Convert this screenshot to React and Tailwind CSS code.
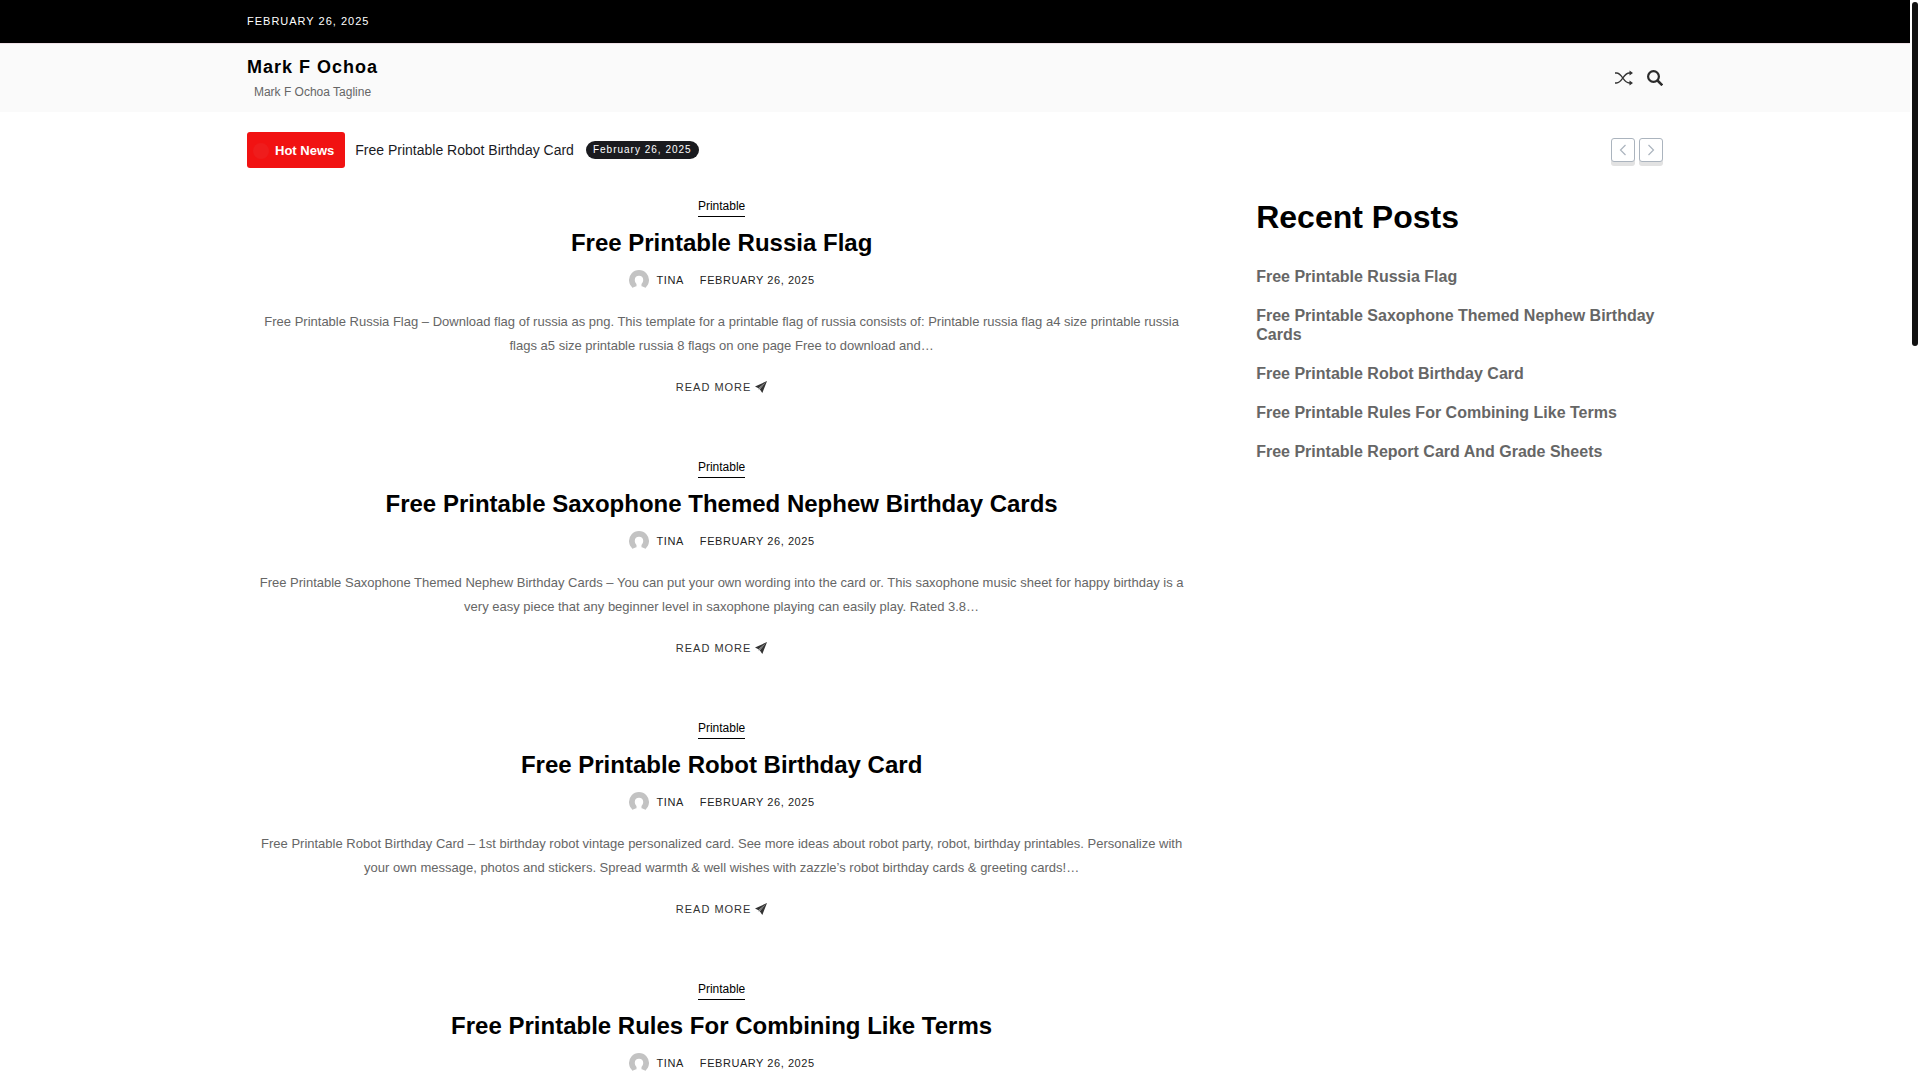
const posts = [
  {
    id: 1,
    title: 'Free Printable Russia Flag',
    excerpt:
      'Free Printable Russia Flag – Download flag of russia as png. This template for a printable flag of russia consists of: Printable russia flag a4 size printable russia flags a5 size printable russia 8 flags on one page Free to download and…',
  },
  {
    id: 2,
    title: 'Free Printable Saxophone Themed Nephew Birthday Cards',
    excerpt:
      'Free Printable Saxophone Themed Nephew Birthday Cards – You can put your own wording into the card or. This saxophone music sheet for happy birthday is a very easy piece that any beginner level in saxophone playing can easily play. Rated 3.8…',
  },
  {
    id: 3,
    title: 'Free Printable Robot Birthday Card',
    excerpt:
      'Free Printable Robot Birthday Card – 1st birthday robot vintage personalized card. See more ideas about robot party, robot, birthday printables. Personalize with your own message, photos and stickers. Spread warmth & well wishes with zazzle’s robot birthday cards & greeting cards!…',
  },
  { id: 4, title: 'Free Printable Rules For Combining Like Terms' },
];

const recentPosts = [
  'Free Printable Russia Flag',
  'Free Printable Saxophone Themed Nephew Birthday Cards',
  'Free Printable Robot Birthday Card',
  'Free Printable Rules For Combining Like Terms',
  'Free Printable Report Card And Grade Sheets',
];

function ShuffleIcon() {
  return (
    <svg width="18" height="16" viewBox="0 0 18 16" fill="none" stroke="#333" strokeWidth="1.3">
      <path d="M0 3h1.5c6 0 6.5 10 13 10H16M0 13h1.5c6 0 6.5-10 13-10H16" />
      <path d="M14.5 .5v5L18 3zM14.500 10.5v5L18 13z" fill="#333" stroke="none" />
    </svg>
  );
}

function SearchIcon() {
  return (
    <svg width="16" height="16" viewBox="0 0 16 16" fill="none" stroke="#2b2b2b">
      <circle cx="6.5" cy="6.5" r="5.4" strokeWidth="2.200" />
      <path d="M10.500 10.500l4.800 4.800" strokeWidth="2.500" />
    </svg>
  );
}

function PlaneIcon() {
  return (
    <svg width="12" height="12" viewBox="0 0 12 12">
      <path d="M12 0L0 5.500l3.500 1.700L10 2 4.800 8.200 7.300 12z" fill="#333" />
      <path d="M12 0L3.500 7.200v1.300l1.300-.3L10.200 2z" fill="#777" />
    </svg>
  );
}

function Avatar() {
  return (
    <svg width="20" height="20" viewBox="0 0 20 20">
      <path
        d="M3.800 17.900A10 10 0 1 1 16.200 17.900C15.500 17 14 16.500 12.500 16.200V14C13.700 13 14.200 11.500 14.200 9.800C14.200 7.300 12.500 5.800 10 5.800S5.800 7.300 5.800 9.800C5.800 11.500 6.300 13 7.500 14V16.200C6 16.500 4.500 17 3.800 17.900Z"
        fill="#c3c3c3"
      />
    </svg>
  );
}

function SliderButton({ label, points }) {
  return (
    <button
      aria-label={label}
      className="w-6 h-6 flex items-center justify-center rounded-[3px] border border-[#abb4be] bg-white shadow-[0_4px_0_#e2e2e2]"
    >
      <svg width="8" height="12" viewBox="0 0 8 12" fill="none" stroke="#abb4be" strokeWidth="1.2">
        <polyline points={points} />
      </svg>
    </button>
  );
}

function Post({ post }) {
  return (
    <article className="flex flex-col items-center text-center pb-[60px]">
      <a href="#" className="text-xs leading-5 text-black border-b border-black">
        Printable
      </a>
      <h2 className="mt-[10px] text-2xl leading-8 font-bold text-black">
        <a href="#">{post.title}</a>
      </h2>
      <div className="mt-[11px] h-5 flex items-center text-[11px] leading-5 tracking-wider uppercase text-[#222]">
        <Avatar />
        <a href="#" className="ml-2">Tina</a>
        <time className="ml-4">February 26, 2025</time>
      </div>
      {post.excerpt && (
        <>
          <p className="mt-5 px-2 text-[13px] leading-6 text-[#666]">{post.excerpt}</p>
          <a href="#" className="mt-[19px] flex items-center gap-1 text-[11px] leading-5 tracking-[1px] uppercase text-[#333]">
            Read More <PlaneIcon />
          </a>
        </>
      )}
    </article>
  );
}

function App() {
  return (
    <div className="h-screen flex overflow-hidden bg-white font-['Liberation_Sans',Arial,sans-serif]">
      <div className="flex-1 min-w-0">
        <div className="bg-black">
          <div className="max-w-[1440px] mx-auto px-3 pt-[11px] pb-3">
            <span className="block text-[11px] leading-5 tracking-[1px] uppercase text-white">February 26, 2025</span>
          </div>
        </div>

        <header className="bg-[#fafafa] border-t border-[#eee0e6]">
          <div className="max-w-[1440px] mx-auto px-3 h-[68px] flex items-center justify-between">
            <div className="text-center">
              <a href="#" className="block pt-px text-lg leading-6 font-bold tracking-[1px] text-black">Mark F Ochoa</a>
              <p className="mt-[3px] text-xs leading-5 text-[#666]">Mark F Ochoa Tagline</p>
            </div>
            <div className="flex items-center gap-[14px]">
              <button aria-label="Random post"><ShuffleIcon /></button>
              <button aria-label="Search"><SearchIcon /></button>
            </div>
          </div>
        </header>

        <main className="max-w-[1440px] mx-auto px-3 pt-5">
          <section className="flex items-center">
            <div className="h-9 pt-px pl-[6px] pr-[11px] flex items-center gap-[6px] rounded-[3px] bg-[#f11212] text-[13px] font-bold text-white">
              <span className="w-4 h-4 rounded-full bg-[#ef1c1c]"></span>
              Hot News
            </div>
            <a href="#" className="ml-[10px] text-sm text-[#1a1b1f]">Free Printable Robot Birthday Card</a>
            <time className="ml-3 px-[7px] rounded-full bg-[#1a1b1f] text-[10px] leading-[18px] tracking-[1px] text-white">
              February 26, 2025
            </time>
            <div className="ml-auto flex gap-1">
              <SliderButton label="Previous" points="6.500,1 1.500,6 6.500,11" />
              <SliderButton label="Next" points="1.500,1 6.500,6 1.500,11" />
            </div>
          </section>

          <div className="mt-7 flex gap-[60px]">
            <div className="flex-[7] min-w-0">
              {posts.map(post => (
                <Post key={post.id} post={post} />
              ))}
            </div>

            <aside className="flex-[3] min-w-0">
              <h2 className="text-[32px] leading-[42px] font-bold text-black">Recent Posts</h2>
              <ul className="mt-[29px] flex flex-col gap-5">
                {recentPosts.map(title => (
                  <li key={title} className="text-base leading-[19px] font-bold text-[#666]">
                    <a href="#">{title}</a>
                  </li>
                ))}
              </ul>
            </aside>
          </div>
        </main>
      </div>

      <div className="w-[10px] p-[2px] bg-white">
        <div className="h-[344px] rounded-full bg-[#111]"></div>
      </div>
    </div>
  );
}

export default App;
